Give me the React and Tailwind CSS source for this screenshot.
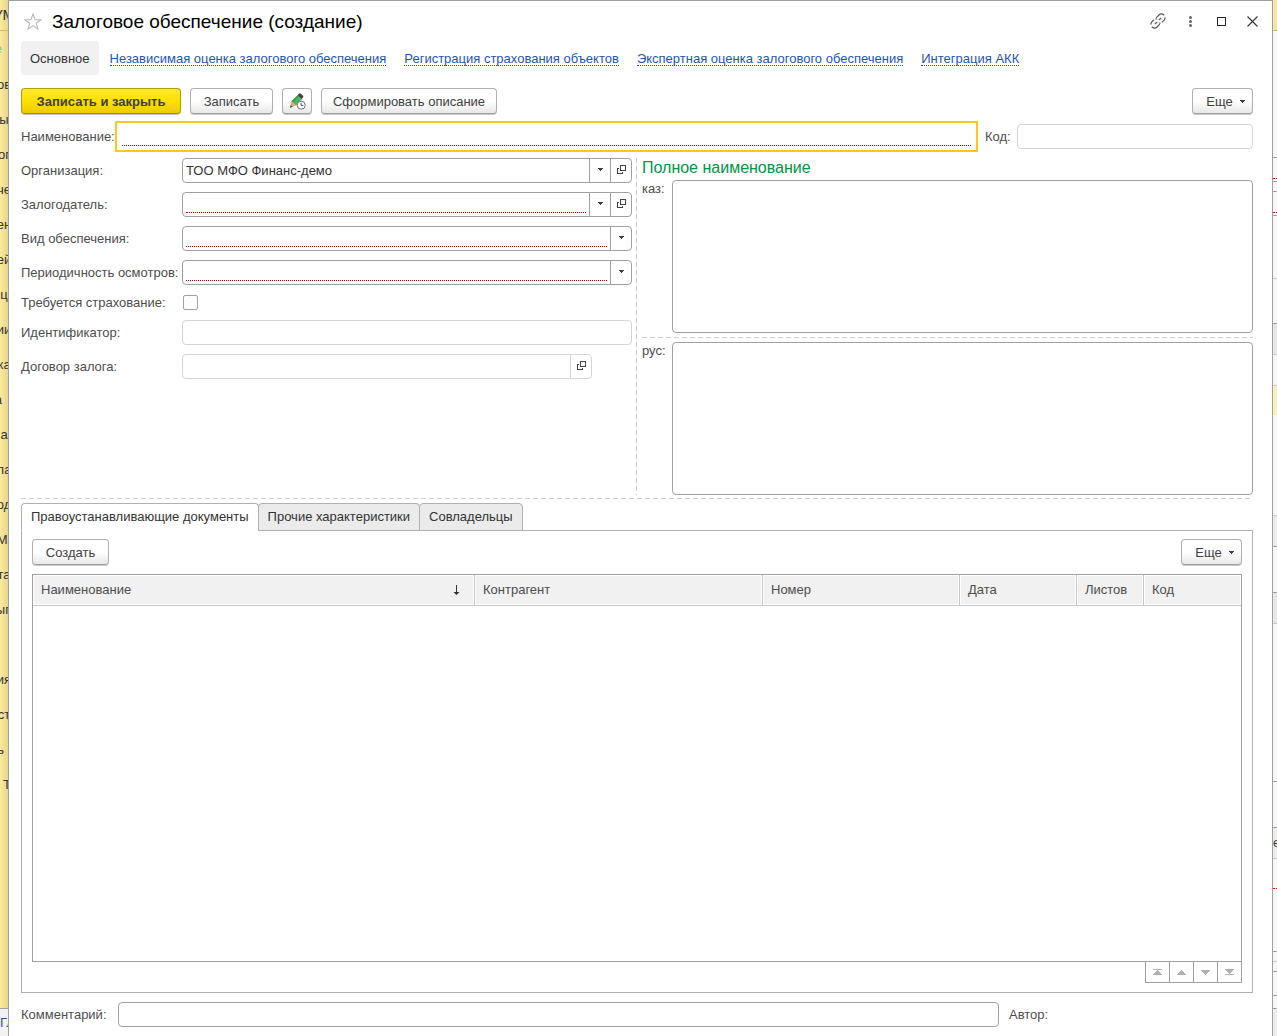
import React, { useState } from 'react';

const navLinks = [
  'Независимая оценка залогового обеспечения',
  'Регистрация страхования объектов',
  'Экспертная оценка залогового обеспечения',
  'Интеграция АКК',
];

const tabs = ['Правоустанавливающие документы', 'Прочие характеристики', 'Совладельцы'];

const columns = [
  { title: 'Наименование', width: 'w-[442px]', sorted: true },
  { title: 'Контрагент', width: 'w-[288px]' },
  { title: 'Номер', width: 'w-[197px]' },
  { title: 'Дата', width: 'w-[117px]' },
  { title: 'Листов', width: 'w-[67px]' },
  { title: 'Код', width: 'w-[97px]' },
];

const sideItems = [
  { text: 'ов' },
  { text: 'ы' },
  { text: 'ог' },
  { text: 'че' },
  { text: 'ен' },
  { text: 'ей' },
  { text: 'ц' },
  { text: 'ии' },
  { text: 'ка' },
  { text: 'а', align: 'justify-end pr-[6px]' },
  { text: 'а' },
  { text: 'ла' },
  { text: 'од' },
  { text: 'М.' },
  { text: 'та' },
  { text: 'ып' },
  { text: '' },
  { text: 'ия' },
  { text: 'ст' },
  { text: 'ь', align: 'justify-end pr-1' },
  { text: 'Т', align: 'justify-start pl-[3px]' },
];

const CaretIcon = () => (
  <svg width="5" height="3" viewBox="0 0 5 3" fill="#404040" shapeRendering="crispEdges">
    <path d="M0 0h5v1H0zM1 1h3v1H1zM2 2h1v1H2z" />
  </svg>
);

const OpenIcon = () => (
  <svg width="9" height="9" viewBox="0 0 9 9" fill="none" stroke="#404040" shapeRendering="crispEdges">
    <path d="M3.5 0.5h5v5h-5z" />
    <path d="M2 3.5H0.5v5h5V7" />
  </svg>
);

const plainButton = 'border-[#b0b0b0] border-b-[#a0a0a0] bg-linear-to-b from-white from-50% to-[#e8e8e8]';
const primaryButton = 'border-[#b3a000] border-b-[#a08e00] bg-[linear-gradient(#ffe92e,#ffe000_50%,#eccb00)] font-bold';

const Button = ({ children, primary, className = '', ...props }) => (
  <button
    type="button"
    className={`mb-px flex h-[26px] items-center justify-center rounded-sm border pt-px text-[13px] text-[#404040] shadow-[0_1px_0_#c8c8c8] ${primary ? primaryButton : plainButton} ${className}`}
    {...props}
  >
    {children}
  </button>
);

const MoreButton = () => (
  <Button className="w-[61px] gap-[7px] pl-[6px]">
    Еще <CaretIcon />
  </Button>
);

const Field = ({ id, label, value = '', required, disabled, dropdown, open, className = '' }) => {
  const line = disabled ? 'border-[#d5d5d5]' : 'border-[#a0a0a0]';
  return (
    <div className="flex items-center">
      <label htmlFor={id} className="w-[161px] shrink-0 whitespace-nowrap">{label}</label>
      <div className={`flex h-[25px] min-w-0 flex-1 rounded-sm border bg-white ${line} ${className}`}>
        <div className="min-w-0 flex-1 px-[3px] pb-[3px]">
          <input
            id={id}
            type="text"
            defaultValue={value}
            disabled={disabled}
            className={`block h-5 w-full pt-[2px] text-[13px] text-[#333] outline-none ${required ? 'border-b border-dotted border-[#d00000]' : ''}`}
          />
        </div>
        {dropdown && (
          <button type="button" aria-label="Выбрать" className={`flex w-[21px] items-center justify-center border-l pb-[2px] ${line}`}>
            <CaretIcon />
          </button>
        )}
        {open && (
          <button type="button" aria-label="Открыть" className={`flex w-[21px] items-center justify-center border-l pb-[2px] ${line}`}>
            <OpenIcon />
          </button>
        )}
      </div>
    </div>
  );
};

const TitleBar = () => (
  <header className="flex h-10 items-center">
    <svg className="ml-[3px]" width="18" height="17" viewBox="0 0 18 17" fill="none" stroke="#b4b8bf" strokeWidth="1.1">
      <path d="M9 1l2 5.6 6 .1-4.8 3.6 1.8 5.8L9 12.6l-5 3.5 1.8-5.8L1 6.7l6-.1z" />
    </svg>
    <h1 className="ml-[10px] flex-1 pt-[2px] text-[19px] text-black">Залоговое обеспечение (создание)</h1>
    <div className="-mr-[15px] flex items-center">
      <button type="button" aria-label="Получить ссылку" className="flex w-8 justify-center">
        <svg width="16" height="16" viewBox="0 0 16 16" fill="none" stroke="#555" strokeWidth="1.2">
          <path d="M6.2 4.8L9 2a3.2 3.2 0 0 1 4.6-.2l.6.6M15 4.4a3.2 3.2 0 0 1-.8 2.8L12 9.4M10.6 10.1l-1.4.1" />
          <path d="M9.8 11.2L7 14a3.2 3.2 0 0 1-4.6.2l-.6-.6M1 11.6a3.2 3.2 0 0 1 .8-2.8L4 6.6M5.4 5.9l1.4-.1" />
          <path d="M5 11l2.2-2.2M8.8 7.2L11 5" />
        </svg>
      </button>
      <button type="button" aria-label="Дополнительно" className="flex w-8 justify-center">
        <svg width="3" height="11" viewBox="0 0 3 11" fill="#666">
          <circle cx="1.5" cy="1.5" r="1.5" />
          <circle cx="1.5" cy="5.5" r="1.5" />
          <circle cx="1.5" cy="9.5" r="1.5" />
        </svg>
      </button>
      <button type="button" aria-label="Развернуть" className="flex w-[30px] justify-center">
        <svg width="9" height="9" viewBox="0 0 9 9" fill="none" stroke="#222" shapeRendering="crispEdges">
          <path d="M0.5 0.5h8v8h-8z" />
        </svg>
      </button>
      <button type="button" aria-label="Закрыть" className="flex w-8 justify-center">
        <svg width="11" height="11" viewBox="0 0 11 11" stroke="#333" strokeWidth="1.1">
          <path d="M0.5 0.5l10 10M10.5 0.5l-10 10" />
        </svg>
      </button>
    </div>
  </header>
);

const FullName = ({ id, label }) => (
  <div className="flex">
    <label htmlFor={id} className="w-[30px] shrink-0 leading-[18px]">{label}</label>
    <textarea id={id} className="block h-[153px] min-w-0 flex-1 resize-none rounded-sm border border-[#a0a0a0] bg-white p-1 outline-none" />
  </div>
);

const scrollButtons = [
  { label: 'В начало', path: 'M0 0h9v1H0zM4 1h1v1H4zM3 2h3v1H3zM2 3h5v1H2zM1 4h7v1H1zM0 5h9v1H0z' },
  { label: 'Вверх', path: 'M4 1h1v1H4zM3 2h3v1H3zM2 3h5v1H2zM1 4h7v1H1zM0 5h9v1H0z' },
  { label: 'Вниз', path: 'M0 1h9v1H0zM1 2h7v1H1zM2 3h5v1H2zM3 4h3v1H3zM4 5h1v1H4z' },
  { label: 'В конец', path: 'M0 0h9v1H0zM1 1h7v1H1zM2 2h5v1H2zM3 3h3v1H3zM4 4h1v1H4zM0 5h9v1H0z' },
];

const DocumentsPanel = () => (
  <div className="-mt-px flex flex-1 flex-col border border-[#b0b0b0] px-[10px] pt-2 pb-[9px]">
    <div className="flex justify-between">
      <Button className="w-[77px]">Создать</Button>
      <MoreButton />
    </div>
    <div className="mt-2 flex-1 border border-[#a0a0a0]">
      <table className="w-full table-fixed border-separate border-spacing-0">
        <thead>
          <tr className="h-[31px]">
            {columns.map((column) => (
              <th
                key={column.title}
                className={`border-r border-b border-[#c8c8c8] bg-[#f1f1f1] px-2 text-left font-normal shadow-[inset_0_0_0_1px_white] last:border-r-0 ${column.width}`}
              >
                <div className="flex items-center justify-between pr-[6px]">
                  {column.title}
                  {column.sorted && (
                    <svg width="7" height="10" viewBox="0 0 7 10" fill="#333">
                      <path d="M3 0h1v7h2.5L3.5 10 0.5 7H3z" />
                    </svg>
                  )}
                </div>
              </th>
            ))}
          </tr>
        </thead>
        <tbody />
      </table>
    </div>
    <div className="-mt-px flex justify-end">
      <div className="flex divide-x divide-[#a0a0a0] border border-[#a0a0a0]">
        {scrollButtons.map((button) => (
          <button key={button.label} type="button" aria-label={button.label} className="flex h-5 w-6 items-center justify-center last:w-[23px]">
            <svg width="9" height="6" viewBox="0 0 9 6" fill="#b0b0b0" shapeRendering="crispEdges">
              <path d={button.path} />
            </svg>
          </button>
        ))}
      </div>
    </div>
  </div>
);

const SideMenu = () => (
  <aside className="flex w-2 shrink-0 flex-col overflow-hidden bg-linear-to-r from-[#fbeb9e] to-[#e8d68a] text-[13px] text-[#333]">
    <div className="flex h-[31px] items-center justify-center border-b border-[#c9b866] text-[15px]">УМ</div>
    <div className="flex h-9 items-center justify-end pr-[6px] text-[#7fc98f]">е</div>
    {sideItems.map((item, index) => (
      <div key={index} className={`flex h-[35px] items-center whitespace-nowrap ${item.align || 'justify-center'}`}>{item.text}</div>
    ))}
    <div className="flex-1" />
    <div className="flex h-7 items-center border-t border-[#a0a0a0] bg-[#f2f2f2] text-[#1f4fb0]">ГЛ</div>
  </aside>
);

// Edge of the form that stays open behind this window
const BackgroundForm = () => (
  <aside className="flex w-1 shrink-0 flex-col overflow-hidden bg-[#f7f7f7] text-[13px]">
    <div className="h-[31px] border-b border-[#c9b866] bg-[#f3e6a4]" />
    <div className="h-[127px] border-b border-[#a0a0a0]" />
    <div className="h-[21px] border-b border-dotted border-[#d00000]" />
    <div className="h-[3px] border-b border-[#a0a0a0]" />
    <div className="h-[10px] border-b border-[#a0a0a0]" />
    <div className="h-[21px] border-b border-dotted border-[#d00000]" />
    <div className="h-[3px] border-b border-[#a0a0a0]" />
    <div className="h-[63px] border-b border-[#c8c8c8]" />
    <div className="h-[45px] border-b border-[#a0a0a0]" />
    <div className="h-[31px] border-b border-[#c8c8c8] bg-[#e6e6e6]" />
    <div className="h-[31px] border-b border-[#c8c8c8]" />
    <div className="h-[29px] bg-[#fbeec0]" />
    <div className="h-[101px] border-b border-[#c8c8c8]" />
    <div className="h-[31px] border-b border-[#a0a0a0] bg-[#ececec]" />
    <div className="h-[46px] border-b border-[#a0a0a0]" />
    <div className="h-[31px] border-b border-[#c8c8c8] bg-[#e6e6e6]" />
    <div className="h-[158px] border-b border-[#a0a0a0]" />
    <div className="h-[46px] border-b border-[#a0a0a0]" />
    <div className="flex h-[31px] items-center border-b border-[#c8c8c8] bg-[#ececec] text-[#404040]">е</div>
    <div className="h-[30px] border-b border-dotted border-[#ff0000]" />
    <div className="h-[63px] border-b border-[#a0a0a0]" />
    <div className="h-[10px] border-b border-[#c8c8c8]" />
    <div className="h-[10px] border-b border-[#a0a0a0]" />
    <div className="h-[24px] border-b border-[#a0a0a0]" />
    <div className="h-[13px] border-b border-[#a0a0a0]" />
    <div className="flex-1 bg-[#ececec]" />
  </aside>
);

const App = () => {
  const [activeTab, setActiveTab] = useState(tabs[0]);

  return (
    <div className="flex min-h-screen bg-white font-['Liberation_Sans',Arial,sans-serif] text-[13px] text-[#4d4d4d]">
      <SideMenu />

      <main className="flex min-w-0 flex-1 flex-col border-x border-t border-[#a0a0a0] pr-[19px] pb-[9px] pl-3">
        <TitleBar />

        <nav className="flex items-center gap-[18px]">
          <a href="#main" className="-mr-[7px] flex h-[34px] items-center rounded-sm bg-[#f1f1f1] px-[9px] pt-px text-[#333]">Основное</a>
          {navLinks.map((link) => (
            <a key={link} href="#section" className="mt-px border-b border-dotted border-[#1f55b5] leading-[13px] text-[#1f55b5]">{link}</a>
          ))}
        </nav>

        {/* Command bar */}
        <div className="mt-[13px] flex gap-[9px]">
          <Button primary className="w-40">Записать и закрыть</Button>
          <Button className="w-[83px]">Записать</Button>
          <Button className="w-[30px]" aria-label="Отложить запись">
            <svg width="17" height="17" viewBox="0 0 17 17" fill="none">
              <path d="M2.4 8.6L8.4 2.4l4.4 3.8-5.8 6.2z" fill="#4cb85c" />
              <path d="M2.4 8.6L8.4 2.4l1.2 1-6 6.2z" fill="#3a9a4b" />
              <path d="M8.4 2.4L10.2.6q.6-.5 1.3 0l2.6 2.2q.6.6.1 1.3L12.8 6.2z" fill="#3f4a45" />
              <path d="M2.4 8.6L7 12.4 1 14.8z" fill="#e5a566" />
              <path d="M1 14.8l.6-2.6 2 1.6z" fill="#4a3a2c" />
              <circle cx="12.2" cy="12.2" r="4" fill="#fff" stroke="#62758c" />
              <path d="M12 9.8v2.6h2.4" stroke="#34506e" />
            </svg>
          </Button>
          <Button className="w-[176px]">Сформировать описание</Button>
          <div className="flex-1" />
          <MoreButton />
        </div>

        <div className="mt-[6px] flex items-center">
          <label htmlFor="name" className="w-[94px]">Наименование:</label>
          <div className="h-[31px] flex-1 border-2 border-[#fac81e] px-[5px]">
            <input id="name" type="text" className="block h-[23px] w-full border-b border-dotted border-[#d00000] outline-none" />
          </div>
          <label htmlFor="code" className="ml-[7px] w-8">Код:</label>
          <input id="code" type="text" disabled className="h-[25px] w-[236px] rounded-sm border border-[#d5d5d5] bg-white px-1" />
        </div>

        <div className="mt-[6px] grid grid-cols-[minmax(0,1fr)_2px_minmax(0,1fr)] gap-x-1">
          <div className="flex flex-col gap-[9px]">
            <Field id="org" label="Организация:" value="ТОО МФО Финанс-демо" dropdown open />
            <Field id="pledger" label="Залогодатель:" required dropdown open />
            <Field id="kind" label="Вид обеспечения:" required dropdown />
            <Field id="period" label="Периодичность осмотров:" required dropdown />
            <div className="flex h-[17px] items-center">
              <label htmlFor="insurance" className="w-[162px]">Требуется страхование:</label>
              <input id="insurance" type="checkbox" className="size-[15px] appearance-none rounded-xs border border-[#a0a0a0] bg-white checked:bg-[#a0a0a0]" />
            </div>
            <Field id="ident" label="Идентификатор:" disabled />
            <Field id="contract" label="Договор залога:" disabled open className="mr-10" />
          </div>

          <svg className="h-full w-px" stroke="#d0d0d0" strokeDasharray="5 3">
            <line x1="0.5" y1="0" x2="0.5" y2="100%" />
          </svg>

          <div className="flex flex-col">
            <h2 className="h-[22px] text-base leading-5 text-[#009646]">Полное наименование</h2>
            <FullName id="name-kz" label="каз:" />
            <svg className="my-1 h-px w-full" stroke="#d0d0d0" strokeDasharray="5 3">
              <line x1="0" y1="0.5" x2="100%" y2="0.5" />
            </svg>
            <FullName id="name-ru" label="рус:" />
          </div>
        </div>

        <svg className="mt-[3px] h-px w-full" stroke="#d0d0d0" strokeDasharray="5 3">
          <line x1="0" y1="0.5" x2="100%" y2="0.5" />
        </svg>

        <div className="z-10 mt-1 flex" role="tablist">
          {tabs.map((tab) => (
            <button
              key={tab}
              type="button"
              role="tab"
              aria-selected={tab === activeTab}
              onClick={() => setActiveTab(tab)}
              className={`-mr-px h-7 rounded-t-sm border border-[#b0b0b0] px-[9px] text-[#333] ${tab === activeTab ? 'border-b-white bg-white' : 'bg-[#ebebeb]'}`}
            >
              {tab}
            </button>
          ))}
        </div>
        <DocumentsPanel />

        <div className="mt-[9px] flex items-center">
          <label htmlFor="comment" className="w-[97px]">Комментарий:</label>
          <input id="comment" type="text" className="h-[25px] flex-1 rounded-sm border border-[#a0a0a0] bg-white px-1 outline-none" />
          <span className="ml-[10px] w-[244px]">Автор:</span>
        </div>
      </main>

      <BackgroundForm />
    </div>
  );
};

export default App;
